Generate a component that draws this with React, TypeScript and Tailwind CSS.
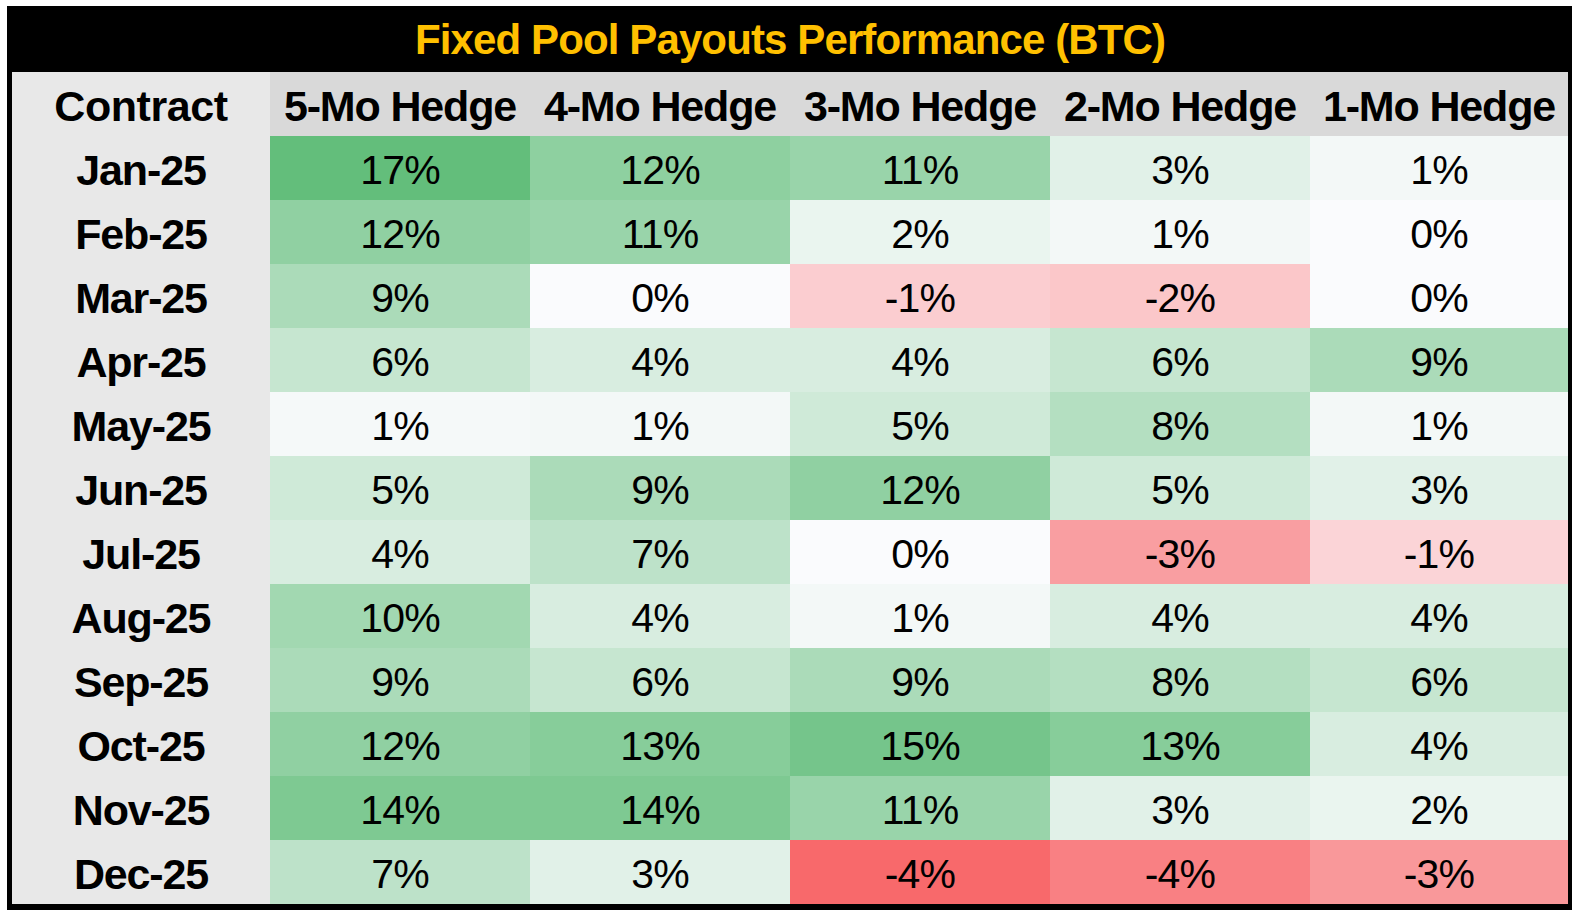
const COLS = ["5-Mo Hedge", "4-Mo Hedge", "3-Mo Hedge", "2-Mo Hedge", "1-Mo Hedge"];

// unrounded values so the colour scale lands where the sheet has it
const ROWS: [string, number[]][] = [
  ["Jan-25", [17, 12.2, 11, 3, 1]],
  ["Feb-25", [12, 11, 2, 1, 0.2]],
  ["Mar-25", [9, 0.2, -1.4, -1.6, 0.2]],
  ["Apr-25", [6, 4, 4, 6, 9]],
  ["May-25", [0.8, 1, 5, 8, 1]],
  ["Jun-25", [5, 9, 12, 5, 3]],
  ["Jul-25", [4, 7, 0.2, -2.8, -1.2]],
  ["Aug-25", [10, 4, 1, 4, 4]],
  ["Sep-25", [9, 6, 9, 8, 6]],
  ["Oct-25", [12, 13, 15, 13, 4]],
  ["Nov-25", [14, 14, 11, 3, 2]],
  ["Dec-25", [7, 3, -4.4, -3.7, -3]],
];

const MIN = -4.4;
const MAX = 17;
const WHITE = [252, 252, 255];
const GREEN = [99, 190, 123];
const RED = [248, 105, 107];

function scale(v: number) {
  const end = v >= 0 ? GREEN : RED;
  const t = v >= 0 ? v / MAX : v / MIN;
  const c = WHITE.map((w, i) => Math.round(w + (end[i] - w) * t));
  return `rgb(${c[0]}, ${c[1]}, ${c[2]})`;
}

export default function App() {
  return (
    <div className="min-h-[916px] bg-white pl-[7px] pt-[6px] font-['Liberation_Sans',Arial,sans-serif] text-black">
      <div className="w-[1565px] bg-black pb-[6px] pl-[5px] pr-[4px]">
        <div className="flex h-[66px] items-center justify-center pt-[2px] text-[42px] font-bold leading-none tracking-[-0.021em] text-[#ffc000]">
          Fixed Pool Payouts Performance (BTC)
        </div>
        <div className="grid grid-cols-[258px_260px_260px_260px_260px_258px] auto-rows-[64px]">
          <div className="flex items-center justify-center bg-[#e8e8e8] pt-[4px] text-[43px] font-bold leading-none tracking-[-0.01em]">
            Contract
          </div>
          {COLS.map((c) => (
            <div
              key={c}
              className="flex items-center justify-center bg-[#d9d9d9] pt-[4px] text-[43px] font-bold leading-none tracking-[-0.027em]"
            >
              {c}
            </div>
          ))}
          {ROWS.map(([month, vals]) => (
            <div key={month} className="contents">
              <div className="flex items-center justify-center bg-[#e8e8e8] pt-[4px] text-[43px] font-bold leading-none tracking-[-0.027em]">
                {month}
              </div>
              {vals.map((v, i) => (
                <div
                  key={i}
                  className="flex items-center justify-center pt-[4px] text-[41px] leading-none tracking-[-0.02em]"
                  style={{ backgroundColor: scale(v) }}
                >
                  {Math.round(v)}%
                </div>
              ))}
            </div>
          ))}
        </div>
      </div>
    </div>
  );
}
